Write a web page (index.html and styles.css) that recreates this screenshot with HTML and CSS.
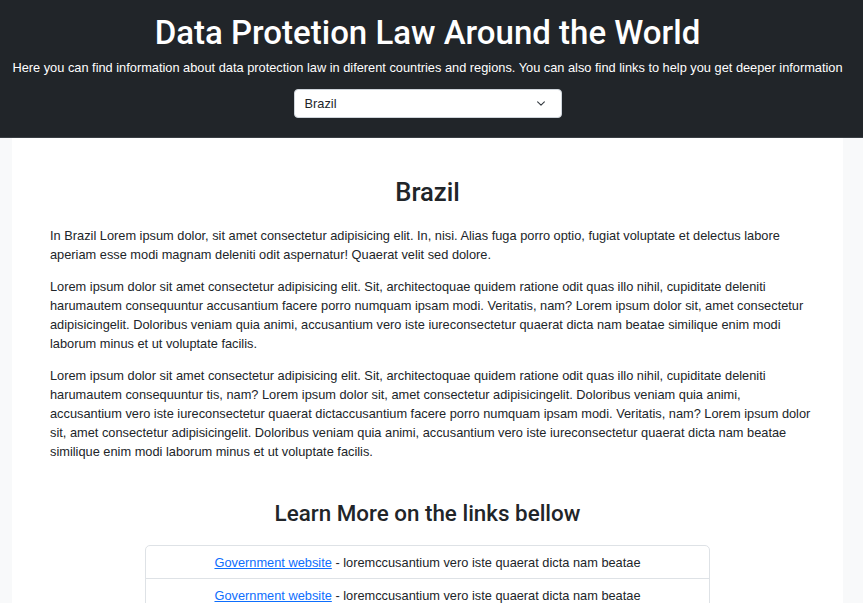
FILE: index.html
```html
<!DOCTYPE html>
<html lang="en">
<head>
<meta charset="utf-8">
<title>Data Protetion Law Around the World</title>
<link rel="stylesheet" href="styles.css">
</head>
<body>
<header class="site-header">
  <div class="header-inner">
    <h1 class="site-title">Data Protetion Law Around the World</h1>
    <p class="site-lead">Here you can find information about data protection law in diferent countries and regions. You can also find links to help you get deeper information</p>
    <div class="country-select">
      <span class="country-select-value">Brazil</span>
      <svg class="country-select-caret" width="12" height="9" viewBox="0 0 16 16" aria-hidden="true"><path d="M2 5l6 6 6-6" fill="none" stroke="#343a40" stroke-width="2" stroke-linecap="round" stroke-linejoin="round"/></svg>
    </div>
  </div>
</header>
<main class="page">
  <section class="country-card">
    <h2 class="country-name">Brazil</h2>
    <p class="text">In Brazil Lorem ipsum dolor, sit amet consectetur adipisicing elit. In, nisi. Alias fuga porro optio, fugiat voluptate et delectus labore aperiam esse modi magnam deleniti odit aspernatur! Quaerat velit sed dolore.</p>
    <p class="text">Lorem ipsum dolor sit amet consectetur adipisicing elit. Sit, architectoquae quidem ratione odit quas illo nihil, cupiditate deleniti harumautem consequuntur accusantium facere porro numquam ipsam modi. Veritatis, nam? Lorem ipsum dolor sit, amet consectetur adipisicingelit. Doloribus veniam quia animi, accusantium vero iste iureconsectetur quaerat dicta nam beatae similique enim modi laborum minus et ut voluptate facilis.</p>
    <p class="text">Lorem ipsum dolor sit amet consectetur adipisicing elit. Sit, architectoquae quidem ratione odit quas illo nihil, cupiditate deleniti harumautem consequuntur tis, nam? Lorem ipsum dolor sit, amet consectetur adipisicingelit. Doloribus veniam quia animi, accusantium vero iste iureconsectetur quaerat dictaccusantium facere porro numquam ipsam modi. Veritatis, nam? Lorem ipsum dolor sit, amet consectetur adipisicingelit. Doloribus veniam quia animi, accusantium vero iste iureconsectetur quaerat dicta nam beatae similique enim modi laborum minus et ut voluptate facilis.</p>
    <h3 class="links-title">Learn More on the links bellow</h3>
    <ul class="link-list">
      <li class="link-item"><a href="#">Government website</a> - loremccusantium vero iste quaerat dicta nam beatae</li>
      <li class="link-item"><a href="#">Government website</a> - loremccusantium vero iste quaerat dicta nam beatae</li>
      <li class="link-item"><a href="#">Government website</a> - loremccusantium vero iste quaerat dicta nam beatae</li>
    </ul>
  </section>
</main>
</body>
</html>
```
FILE: styles.css
```css
* { box-sizing: border-box; }
html, body { margin: 0; padding: 0; }
body {
  font-family: "Liberation Sans", Arial, sans-serif;
  font-size: 12.8px;
  line-height: 19.2px;
  color: #212529;
  background: #f8f9fa;
}
.site-header {
  background: #212529;
  border-bottom: 1px solid #3a3f44;
  padding: 13px 8px 19px 0;
  color: #fff;
}
.header-inner {
  display: flex;
  flex-direction: column;
  align-items: center;
  text-align: center;
}
.site-title {
  margin: 0 0 5px;
  font-family: Roboto, "Liberation Sans", sans-serif;
  font-size: 33px;
  font-weight: 500;
  line-height: 1.2;
}
.site-lead {
  margin: 0 0 12px;
  white-space: nowrap;
}
.country-select {
  width: 268px;
  height: 29px;
  background: #fff;
  border: 1px solid #ced4da;
  border-radius: 4px;
  display: flex;
  align-items: center;
  justify-content: space-between;
  padding: 0 14px 0 10px;
  color: #212529;
}
.country-select-caret { display: block; }
.page {
  width: 855px;
  padding: 0 12px;
}
.country-card {
  background: #fff;
  padding: 39px 38px 40px;
}
.country-name {
  margin: 0 0 18.5px;
  text-align: center;
  font-family: Roboto, "Liberation Sans", sans-serif;
  font-size: 25.6px;
  font-weight: 500;
  line-height: 1.2;
}
.text {
  margin: 0 -7px 12.2px 0;
}
.links-title {
  margin: 38.5px 0 18.5px;
  text-align: center;
  font-family: Roboto, "Liberation Sans", sans-serif;
  font-size: 22.4px;
  font-weight: 500;
  line-height: 1.2;
}
.link-list {
  list-style: none;
  margin: 0 auto;
  padding: 0;
  width: 565px;
  border: 1px solid #dee2e6;
  border-radius: 5px;
}
.link-item {
  padding: 6.4px 12.8px;
  text-align: center;
  border-top: 1px solid #dee2e6;
}
.link-item:first-child { border-top: 0; }
.link-item a { color: #0d6efd; text-decoration: underline; }
```
